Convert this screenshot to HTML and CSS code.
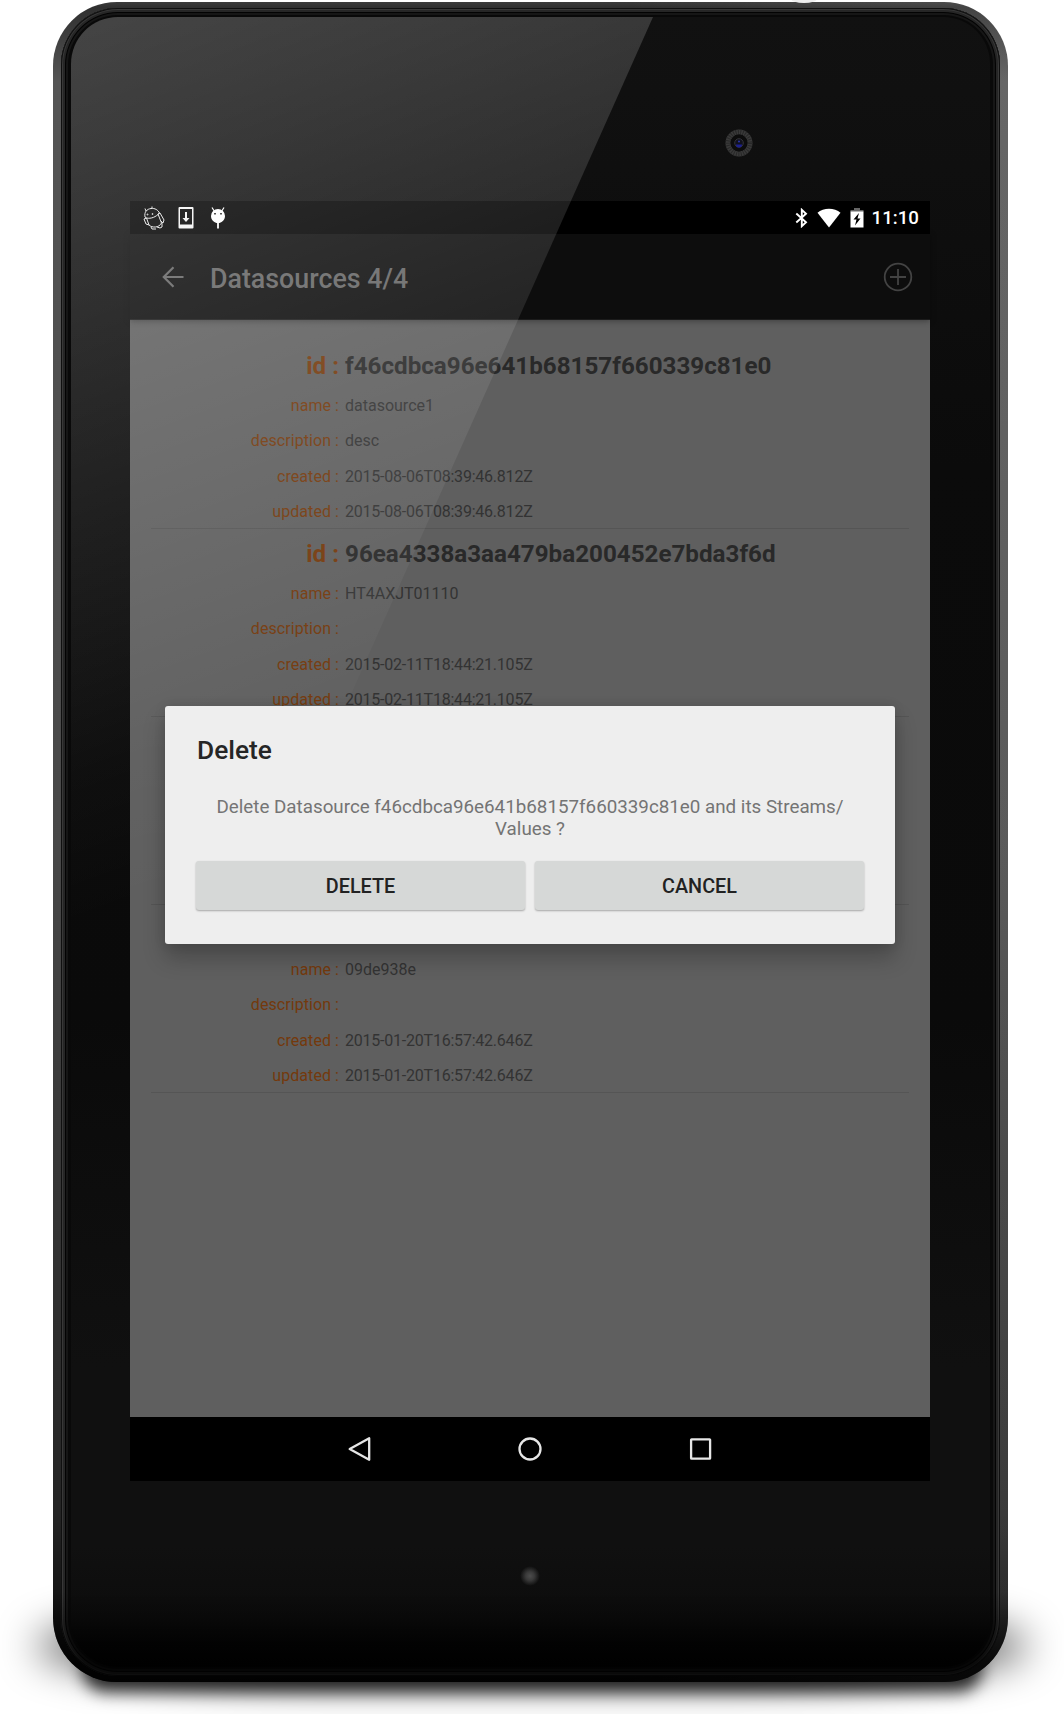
FILE: index.html
```html
<!DOCTYPE html>
<html lang="en">
<head>
<meta charset="utf-8">
<title>Datasources</title>
<link rel="stylesheet" href="styles.css">
</head>
<body>
<div class="stage">
  <div class="ground-shadow"></div>
  <div class="ground-shadow tight"></div>
  <div class="device">
    <div class="bezel">
      <div class="glass">
        <svg class="camera" viewBox="0 0 28 28" width="28" height="28">
          <circle cx="14" cy="14" r="11" fill="none" stroke="#3a3a3a" stroke-width="5"/>
          <circle cx="14" cy="14" r="11" fill="none" stroke="#282828" stroke-width="5" stroke-dasharray="1 1.4"/>
          <circle cx="14" cy="14" r="8.4" fill="#0c0c0c"/>
          <circle cx="14" cy="14" r="4.3" fill="#11111c" stroke="#34343a"/>
          <path d="M11 15.500h6a3 3 0 0 1-6 0z" fill="#1c2090"/>
          <circle cx="14" cy="12.500" r="1" fill="#2836b0"/>
        </svg>
        <main class="screen">
          <header class="status">
            <svg width="24" height="24" viewBox="0 0 24 24" fill="none" stroke="#e8e8e8" stroke-width="1">
              <path d="M3 11C2 6 5 3 9 2.500C13 2 16 4 17.500 7C14 11 9 13 4.500 12z"/>
              <path d="M4.500 12L7 19C10 22 17 22 19.500 17L16 8"/>
              <path d="M16 8l2-1 4 7-1 3-2-2M4.500 12L2 13l2 5 3 1M9 21l1 2 4 0M15 21l3 1 2-1 0-4M4 5L3 2.500M10 2.500V.500"/>
              <circle cx="5.500" cy="8.500" r=".5"/><circle cx="10.500" cy="8" r=".5"/>
            </svg>
            <svg width="16" height="22" viewBox="0 0 16 22">
              <path fill="#f4f4f4" fill-rule="evenodd" d="M1.500 0h13q1 0 1 1v19.500q0 1-1 1h-13q-1 0-1-1v-19.500q0-1 1-1zM2 2v15.500h12v-15.500zM7 5h2v6h2.500L8 15 4.500 11H7z"/>
            </svg>
            <svg width="16" height="22" viewBox="0 0 16 22">
              <path d="M2 .5L4.200 4M14 .5L11.800 4" stroke="#fff" stroke-width="1.200"/>
              <path fill="#fff" fill-rule="evenodd" d="M8 2a7 7 0 0 1 7 7c0 3.500-2.500 6-5.500 7h-3C3.500 15 1 12.500 1 9a7 7 0 0 1 7-7zM4.200 6v1.600h1.600V6zM10.200 6v1.600h1.600V6z"/>
              <path fill="#fff" d="M7.100 16h1.800v5.500H7.100z"/>
            </svg>
            <span class="spacer"></span>
            <svg class="bt" width="14" height="20" viewBox="0 0 14 20" fill="none" stroke="#fff" stroke-width="1.900">
              <path d="M1.300 5.500L11 14.300 6.800 18.200V1.800L11 5.700 1.300 14.500"/>
            </svg>
            <svg class="wifi" width="24" height="20" viewBox="0 0 24 20"><path fill="#fff" d="M12 19.500L.5 4.800C6.500-.6 17.500-.6 23.500 4.800z"/></svg>
            <svg class="battery" width="14" height="20" viewBox="0 0 14 20">
              <path fill="#666" d="M4 0h6v2h3.500v2H.5V2H4z"/>
              <path fill="#fff" fill-rule="evenodd" d="M.5 3.500h13v16H.5zM9 5L3.500 11.500h3L5 17.500 10.500 10.500h-3z"/>
            </svg>
            <span class="clock">11:10</span>
          </header>
          <div class="appbar">
            <svg class="back" width="22" height="22" viewBox="0 0 22 22" fill="none" stroke="#666" stroke-width="2.200"><path d="M21.500 11H2M11.500 1.300L1.800 11l9.700 9.700"/></svg>
            <h1>Datasources 4/4</h1>
            <svg class="add" width="30" height="30" viewBox="0 0 30 30" fill="none" stroke="#434343" stroke-width="1.800"><circle cx="15" cy="15" r="13.300"/><path d="M15 7v16M7 15h16"/></svg>
          </div>
          <div class="list">
            <dl class="item">
              <dt>id :</dt><dd>f46cdbca96e641b68157f660339c81e0</dd>
              <dt>name :</dt><dd>datasource1</dd>
              <dt>description :</dt><dd>desc</dd>
              <dt>created :</dt><dd class="date">2015-08-06T08:39:46.812Z</dd>
              <dt>updated :</dt><dd class="date">2015-08-06T08:39:46.812Z</dd>
            </dl>
            <dl class="item">
              <dt>id :</dt><dd>96ea4338a3aa479ba200452e7bda3f6d</dd>
              <dt>name :</dt><dd>HT4AXJT01110</dd>
              <dt>description :</dt><dd></dd>
              <dt>created :</dt><dd class="date">2015-02-11T18:44:21.105Z</dd>
              <dt>updated :</dt><dd class="date">2015-02-11T18:44:21.105Z</dd>
            </dl>
            <dl class="item"></dl>
            <dl class="item">
              <dt></dt><dd></dd>
              <dt>name :</dt><dd>09de938e</dd>
              <dt>description :</dt><dd></dd>
              <dt>created :</dt><dd class="date">2015-01-20T16:57:42.646Z</dd>
              <dt>updated :</dt><dd class="date">2015-01-20T16:57:42.646Z</dd>
            </dl>
          </div>
          <nav class="navbar">
            <svg width="26" height="26" viewBox="0 0 26 26"><path stroke-linejoin="round" d="M23.200 2.200v21.600L3.700 13z"/></svg>
            <svg width="26" height="26" viewBox="0 0 26 26"><circle cx="13" cy="13" r="10.500"/></svg>
            <svg width="26" height="26" viewBox="0 0 26 26"><rect x="3.100" y="3.300" width="19" height="19.400" rx=".5"/></svg>
          </nav>
          <section class="dialog">
            <h2>Delete</h2>
            <p>Delete Datasource f46cdbca96e641b68157f660339c81e0 and its Streams/<br>Values ?</p>
            <div class="actions"><button>DELETE</button><button>CANCEL</button></div>
          </section>
        </main>
        <div class="led"></div>
        <div class="glare"></div>
      </div>
    </div>
    <div class="side-key"></div>
  </div>
</div>
</body>
</html>
```
FILE: styles.css
```css
* { box-sizing: border-box; }
body { margin: 0; background: #fff; font-family: Roboto, "Liberation Sans", sans-serif; }
.stage { position: relative; width: 1064px; height: 1714px; overflow: hidden; padding: 2px 0 0 53px; }
.ground-shadow { position: absolute; left: 36px; top: 1610px; width: 992px; height: 72px; border-radius: 50%/60px; background: rgba(0,0,0,.65); filter: blur(20px); }
.ground-shadow.tight { left: 82px; top: 1645px; width: 900px; height: 47px; border-radius: 30px; background: rgba(0,0,0,.8); filter: blur(8px); }
.side-key { position: absolute; left: 738px; top: -3px; width: 26px; height: 4px; background: #eee; border-radius: 0 0 13px 13px / 0 0 4px 4px; }
.device {
  position: relative; width: 955px; height: 1680px; padding: 6px 8px; border-radius: 64px;
  background: linear-gradient(90deg, transparent 0 60%, rgba(255,255,255,.1) 99%), linear-gradient(180deg, #3c3c3c 0, #303030 5px, #555 80px, #484848 50%, #242424 90%, #050505 100%);
}
.device::after {
  content: ""; position: absolute; inset: auto 0 0; height: 90px; border-radius: 0 0 64px 64px;
  background: linear-gradient(180deg, transparent, rgba(0,0,0,.75) 80%); pointer-events: none;
}
.bezel {
  height: 100%; padding: 9px 10px; border-radius: 57px; background: #090909;
  box-shadow: inset 0 0 0 1px #101010, inset 0 0 0 2px #383838, inset 0 0 0 4px #262626, inset 0 0 0 5px #030303, inset 0 0 0 7px #161616;
}
.glass {
  position: relative; height: 1650px; border-radius: 47px; overflow: hidden; padding: 184px 59px 0;
  display: flex; flex-direction: column; align-items: flex-start;
  background: linear-gradient(180deg, #111 0, #0b0b0b 450px, #0a0a0a 1000px, #101010 1350px, #101010 1530px, #0c0c0c 1600px, #010101 1645px);
}
.camera { position: absolute; left: 654px; top: 112px; }
.screen { position: relative; width: 800px; height: 1280px; flex: none; background: #5f5f5f; display: flex; flex-direction: column; }
.status { height: 33px; background: #000; display: flex; align-items: center; padding: 0 11px 0 12px; color: #fff; }
.status svg:nth-child(2) { margin: 0 0 0 12px; }
.status svg:nth-child(3) { margin: 1px 0 0 16px; }
.spacer { flex: 1; }
.wifi { margin-left: 8px; }
.battery { margin-left: 9px; }
.clock { margin-left: 8px; font-size: 18.700px; font-weight: 500; line-height: 33px; padding-top: 2px; }
.appbar { height: 86px; background: #0d0d0d; display: flex; align-items: center; padding: 0 17px 0 32px; box-shadow: 0 1px 6px rgba(0,0,0,.35); border-bottom: 1px solid #1b1b1b; }
.appbar svg { margin-top: 1px; }
.appbar h1 { flex: 1; margin: 4px 0 0 26px; font-size: 26.800px; font-weight: 500; color: #656565; }
.list { flex: 1; padding: 21px 21px 0; }
.item { margin: 0; height: 188px; padding-right: 20px; border-bottom: 1px solid #555; display: grid; grid-template-columns: 188px 1fr; column-gap: 6px; grid-template-rows: 46px repeat(4, 35.300px); line-height: 37.300px; font-size: 16px; }
.item dt { text-align: right; color: #74390c; letter-spacing: .06px; }
.item dd { margin: 0; color: #333; }
.item .date { letter-spacing: -.22px; }
.item dt:first-of-type, .item dd:first-of-type { font-size: 24.200px; font-weight: 700; line-height: 51px; letter-spacing: 0; }
.item dd:first-of-type { color: #292929; }
.navbar { height: 64px; background: #000; display: flex; justify-content: center; gap: 145px; align-items: center; }
.navbar svg { fill: none; stroke: #e6e6e6; stroke-width: 2.300; }
.dialog { position: absolute; left: 35px; top: 505px; width: 730px; height: 238px; padding: 28px 31px; border-radius: 3px; background: #eee; box-shadow: 0 14px 22px rgba(0,0,0,.24), 0 0 12px rgba(0,0,0,.1); }
.dialog h2 { margin: 0; font-size: 26.300px; font-weight: 500; line-height: 32px; padding-left: 1px; color: #222; }
.dialog p { margin: 30px 0 0; text-align: center; font-size: 18.800px; line-height: 22px; color: #747474; white-space: nowrap; }
.actions { display: flex; gap: 10px; margin-top: 21px; }
.actions button { flex: 1; height: 49px; padding: 2px 0 0; border: 0; border-radius: 3px; background: #d6d8d7; box-shadow: 0 1px 2px rgba(0,0,0,.3); font: 500 19.800px Roboto, sans-serif; color: #222; }
.led { position: absolute; left: 449px; top: 1549px; width: 20px; height: 20px; border-radius: 50%; background: radial-gradient(circle, #4c4c4c 0, #3a3a3a 30%, transparent 70%); }
.glare { position: absolute; inset: 0; pointer-events: none; clip-path: polygon(0 0, 582px 0, 0 1305px); background: linear-gradient(160deg, rgba(255,255,255,.22) 0, rgba(255,255,255,.1) 420px, rgba(255,255,255,.02) 720px, transparent 860px); }
```
